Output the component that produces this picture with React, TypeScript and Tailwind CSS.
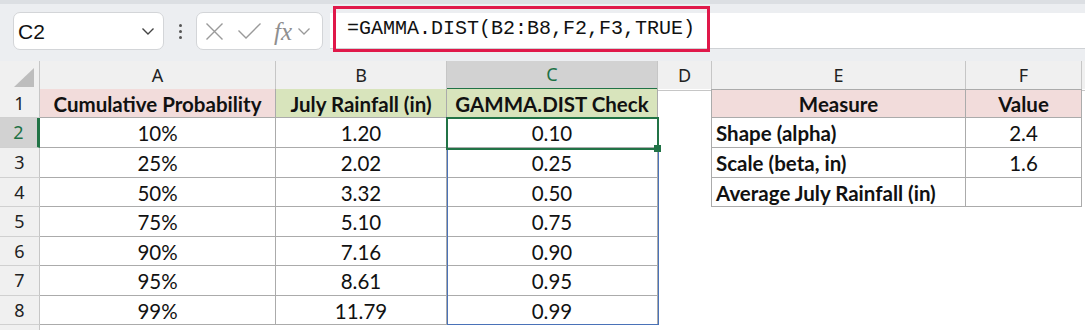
import React from "react";

const COLS = [
  { key: "A", w: 236 },
  { key: "B", w: 171 },
  { key: "C", w: 211 },
  { key: "D", w: 54 },
  { key: "E", w: 254 },
  { key: "F", w: 116 },
];
const ROW_H = [29, 30, 30, 29, 30, 29, 30, 29];

const dataA = ["10%", "25%", "50%", "75%", "90%", "95%", "99%"];
const dataB = ["1.20", "2.02", "3.32", "5.10", "7.16", "8.61", "11.79"];
const dataC = ["0.10", "0.25", "0.50", "0.75", "0.90", "0.95", "0.99"];

const cellFont = { fontFamily: "Lato, 'Noto Sans', sans-serif" };

function Cell({
  children,
  className = "",
}: {
  children?: React.ReactNode;
  className?: string;
}) {
  return (
    <div
      className={`flex items-center pt-[2px] text-[20.5px] text-[#111] leading-none overflow-hidden whitespace-nowrap ${className}`}
      style={cellFont}
    >
      {children}
    </div>
  );
}

export default function App() {
  const rows: React.ReactNode[] = [];
  for (let r = 0; r < 8; r++) {
    const rowNum = r + 1;
    const h = ROW_H[r];
    const sel = rowNum === 2;
    const cells: React.ReactNode[] = [];
    cells.push(
      <div
        key="rh"
        className={`flex items-center justify-center border-b border-[#d0d0d0] text-[18px] ${
          sel
            ? "bg-[#d2d2d2] text-[#1e7145] border-r-[3px] border-r-[#217346]"
            : "bg-[#f0f0f0] text-[#222] border-r border-r-[#c6c6c6]"
        }`}
        style={{ fontFamily: "'Noto Sans', sans-serif" }}
      >
        {rowNum}
      </div>
    );
    if (rowNum === 1) {
      cells.push(
        <Cell key="a" className="justify-center font-bold bg-[#f2dcdb] border-r border-b border-[#ababab]">
          Cumulative Probability
        </Cell>,
        <Cell key="b" className="justify-center font-bold bg-[#d8e4bc] border-r border-b border-[#ababab]">
          July Rainfall (in)
        </Cell>,
        <Cell key="c" className="justify-center font-bold bg-[#d8e4bc] border-r border-b border-[#ababab]">
          GAMMA.DIST Check
        </Cell>,
        <Cell key="d" className="border-r border-[#ababab]" />,
        <Cell key="e" className="justify-center font-bold bg-[#f2dcdb] border-t border-r border-b border-[#ababab]">
          Measure
        </Cell>,
        <Cell key="f" className="justify-center font-bold bg-[#f2dcdb] border-t border-r border-b border-[#ababab]">
          Value
        </Cell>,
        <div key="g" />
      );
    } else {
      const i = r - 1;
      const eText =
        rowNum === 2
          ? "Shape (alpha)"
          : rowNum === 3
          ? "Scale (beta, in)"
          : rowNum === 4
          ? "Average July Rainfall (in)"
          : null;
      const fText = rowNum === 2 ? "2.4" : rowNum === 3 ? "1.6" : rowNum === 4 ? "" : null;
      cells.push(
        <Cell key="a" className="justify-center border-r border-b border-[#ababab]">
          {dataA[i]}
        </Cell>,
        <Cell key="b" className="justify-center border-r border-b border-[#ababab]">
          {dataB[i]}
        </Cell>,
        <Cell key="c" className="justify-center border-r border-b border-[#ababab]">
          {dataC[i]}
        </Cell>,
        <Cell key="d" className={eText !== null ? "border-r border-[#ababab]" : ""} />,
        eText !== null ? (
          <Cell key="e" className="justify-start pl-[4px] font-bold border-r border-b border-[#ababab]">
            {eText}
          </Cell>
        ) : (
          <div key="e" />
        ),
        fText !== null ? (
          <Cell key="f" className="justify-center border-r border-b border-[#ababab]">
            {fText}
          </Cell>
        ) : (
          <div key="f" />
        ),
        <div key="g" />
      );
    }
    rows.push(
      <div
        key={rowNum}
        className="grid grid-cols-[40px_236px_171px_211px_54px_254px_116px_1fr]"
        style={{ height: h }}
      >
        {cells}
      </div>
    );
  }

  return (
    <div className="w-[1085px] h-[330px] overflow-hidden bg-white relative">
      {/* Toolbar / formula bar */}
      <div className="h-[61px] bg-[#eceef1] border-t-[4px] border-[#dcdfe3] relative">
        <div className="flex items-start h-full">
          {/* Name box */}
          <div className="mt-[8px] ml-[13px] w-[151px] h-[38px] bg-white border border-[#d3d5d8] rounded-[7px] flex items-center justify-between pl-[4px] pr-[8px]">
            <span
              className="text-[21px] text-[#111] leading-none"
              style={{ fontFamily: "'Liberation Sans', Arial, sans-serif" }}
            >
              C2
            </span>
            <svg width="14" height="9" viewBox="0 0 14 9">
              <path d="M1.5 1.5 L7 7 L12.5 1.5" fill="none" stroke="#444" strokeWidth="1.4" />
            </svg>
          </div>
          {/* vertical dots */}
          <div className="mt-[8px] w-[32px] h-[38px] flex flex-col items-center justify-center gap-[3px]">
            <span className="w-[3px] h-[3px] bg-[#555] rounded-full" />
            <span className="w-[3px] h-[3px] bg-[#555] rounded-full" />
            <span className="w-[3px] h-[3px] bg-[#555] rounded-full" />
          </div>
          {/* fx box */}
          <div className="mt-[8px] w-[127px] h-[38px] bg-white border border-[#d3d5d8] rounded-[7px] flex items-center pl-[8px]">
            <svg width="19" height="19" viewBox="0 0 19 19">
              <path d="M1.5 1.5 L17.5 17.5 M17.5 1.5 L1.5 17.5" stroke="#9a9a9a" strokeWidth="1.4" fill="none" />
            </svg>
            <svg width="25" height="18" viewBox="0 0 25 18" className="ml-[13px]">
              <path d="M1.5 8.5 L9 16 L23.5 1.5" stroke="#9a9a9a" strokeWidth="1.4" fill="none" />
            </svg>
            <span
              className="ml-[12px] text-[25px] italic text-[#8f8f8f] leading-none"
              style={{ fontFamily: "'Liberation Serif', 'Times New Roman', serif" }}
            >
              fx
            </span>
            <svg width="14" height="9" viewBox="0 0 14 9" className="ml-[5px]">
              <path d="M1.5 1.5 L7 7 L12.5 1.5" fill="none" stroke="#9a9a9a" strokeWidth="1.3" />
            </svg>
          </div>
          {/* Formula input */}
          <div className="mt-[9px] ml-[7px] flex-1 h-[36px] bg-white border-b border-[#cfd2d5] relative">
            <div className="absolute left-[3px] top-[-7px] w-[377px] h-[46px] border-[3px] border-[#e0184a] flex items-center pl-[11px]">
              <span
                className="text-[20px] text-[#111] leading-none"
                style={{ fontFamily: "'Liberation Mono', 'Courier New', monospace" }}
              >
                =GAMMA.DIST(B2:B8,F2,F3,TRUE)
              </span>
            </div>
          </div>
        </div>
      </div>

      {/* Column headers */}
      <div
        className="grid grid-cols-[40px_236px_171px_211px_54px_254px_116px_1fr] h-[28px] bg-[#f0f0f0]"
        style={{ fontFamily: "'Noto Sans', sans-serif" }}
      >
        <div className="relative border-r border-b border-[#c6c6c6]">
          <svg width="20" height="19" viewBox="0 0 20 19" className="absolute right-[5px] bottom-[3px]">
            <path d="M20 0 L20 19 L0 19 Z" fill="#bdbdbd" />
          </svg>
        </div>
        {COLS.map((c) => (
          <div
            key={c.key}
            className={`flex items-center justify-center text-[18px] border-r border-[#c6c6c6] ${
              c.key === "C"
                ? "bg-[#d2d2d2] text-[#1e7145] border-b-[3px] border-b-[#217346]"
                : "text-[#222] border-b border-b-[#c6c6c6]"
            }`}
          >
            {c.key}
          </div>
        ))}
        <div className="border-b border-[#c6c6c6]" />
      </div>

      {/* Rows */}
      <div className="relative">
        {rows}
        <div className="grid grid-cols-[40px_1fr] h-[10px]">
          <div className="bg-[#f0f0f0] border-r border-[#c6c6c6]" />
          <div />
        </div>
        {/* Blue range border C2:C8 */}
        <div className="absolute left-[447px] top-[29px] w-[212px] h-[207px] border-[1.5px] border-[#4a72b8] pointer-events-none" />
        {/* Active cell C2 */}
        <div className="absolute left-[446px] top-[28px] w-[213px] h-[33px] border-[2.5px] border-[#217346] pointer-events-none" />
        {/* Fill handle */}
        <div className="absolute left-[654px] top-[56px] w-[7px] h-[7px] bg-[#217346]" />
      </div>
    </div>
  );
}
